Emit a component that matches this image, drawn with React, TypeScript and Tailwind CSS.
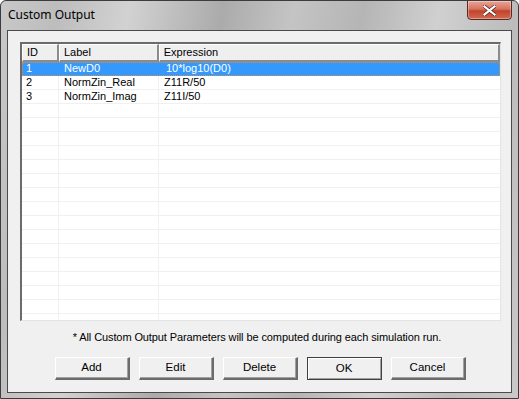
import React from "react";

const rows = [
  { id: "1", label: "NewD0", expr: "10*log10(D0)" },
  { id: "2", label: "NormZin_Real", expr: "Z11R/50" },
  { id: "3", label: "NormZin_Imag", expr: "Z11I/50" },
];

const EMPTY_ROWS = 16;

function HeaderCell({ w, children }: { w: string; children?: React.ReactNode }) {
  return (
    <div
      className={`${w} h-full flex items-center pl-[4px] border-t border-l border-t-white border-l-white border-r-2 border-b-2 border-r-[#8c8c8c] border-b-[#8c8c8c] bg-[#efefef]`}
    >
      {children}
    </div>
  );
}

function Button({ label, isDefault }: { label: string; isDefault?: boolean }) {
  return (
    <button
      className={`w-[75px] h-[23px] bg-[#f0f0f0] text-[11.5px] text-black flex items-center justify-center ${
        isDefault
          ? "border border-[#404040] shadow-[inset_1px_1px_0_#ffffff,inset_-1px_-1px_0_#a0a0a0]"
          : "border-t border-l border-t-white border-l-white border-r-2 border-b-2 border-r-[#6b6b6b] border-b-[#6b6b6b] shadow-[inset_-1px_-1px_0_#a0a0a0]"
      }`}
    >
      {label}
    </button>
  );
}

export default function App() {
  return (
    <div
      className="w-[519px] h-[399px] relative overflow-hidden rounded-t-[6px] border border-[#3c3c3c] bg-[linear-gradient(100deg,#c8c8c8_0%,#bdbdbd_10%,#d2d2d2_22%,#ababab_38%,#c4c4c4_50%,#b5b5b5_62%,#d0d0d0_75%,#bcbcbc_88%,#c9c9c9_100%)]"
      style={{ fontFamily: '"Liberation Sans", Arial, sans-serif' }}
    >
      {/* title bar */}
      <div className="h-[29px] flex items-center pl-[7px] pb-[1px] text-[12px] text-black" style={{ fontFamily: '"Noto Sans", "Liberation Sans", sans-serif' }}>
        Custom Output
      </div>
      <div className="absolute right-[6px] top-[-1px] w-[45px] h-[20px] rounded-b-[4px] border border-[#5a2a22] bg-[linear-gradient(#e9a598_0%,#d7725f_45%,#c2432b_55%,#d06a52_100%)] flex items-center justify-center shadow-[inset_0_0_0_1px_rgba(255,255,255,0.35)]">
        <svg width="13" height="11" viewBox="0 0 13 11">
          <path d="M1.5 1.5 L11.5 9.5 M11.5 1.5 L1.5 9.5" stroke="#5b2a20" strokeWidth="3.6" strokeLinecap="square" />
          <path d="M1.5 1.5 L11.5 9.5 M11.5 1.5 L1.5 9.5" stroke="#ffffff" strokeWidth="2.2" strokeLinecap="square" />
        </svg>
      </div>

      {/* client area */}
      <div className="mx-[6px] h-[363px] border border-[#4a4a4a] bg-[#f0f0f0] flex flex-col">
        <div className="pt-[11px] pl-[12px]">
          <div className="w-[481px] h-[279px] bg-white border-l-2 border-t-2 border-l-[#6b6b6b] border-t-[#6b6b6b] border-r border-b border-r-[#e3e3e3] border-b-[#e3e3e3] overflow-hidden text-[11px] text-black">
            <div className="flex h-[18px]">
              <HeaderCell w="w-[37px]">ID</HeaderCell>
              <HeaderCell w="w-[100px]">Label</HeaderCell>
              <HeaderCell w="w-[342px]">Expression</HeaderCell>
            </div>
            {rows.map((r, i) => (
              <div
                key={r.id}
                className={`flex h-[14px] ${
                  i === 0 ? "bg-[#3399ff] text-white outline-1 outline-dotted outline-[#e08a3a] -outline-offset-1" : "border-b border-[#f0f0f0]"
                }`}
              >
                <div className={`w-[37px] pl-[4px] leading-[13px] ${i === 0 ? "" : "border-r border-[#f0f0f0]"}`}>{r.id}</div>
                <div className={`w-[100px] pl-[5px] leading-[13px] ${i === 0 ? "" : "border-r border-[#f0f0f0]"}`}>{r.label}</div>
                <div className={`flex-1 leading-[13px] ${i === 0 ? "pl-[7px]" : "pl-[5px]"}`}>{r.expr}</div>
              </div>
            ))}
            {Array.from({ length: EMPTY_ROWS }).map((_, i) => (
              <div key={i} className="flex h-[14px] border-b border-[#f0f0f0]">
                <div className="w-[37px] border-r border-[#f0f0f0]" />
                <div className="w-[100px] border-r border-[#f0f0f0]" />
                <div className="flex-1" />
              </div>
            ))}
          </div>
        </div>

        <div className="mt-[9px] h-[14px] leading-[14px] text-center text-[11px] text-black pr-[5px] tracking-[-0.1px]">
          * All Custom Output Parameters will be computed during each simulation run.
        </div>

        <div className="mt-[13px] flex justify-center gap-[9px] pl-[1px]">
          <Button label="Add" />
          <Button label="Edit" />
          <Button label="Delete" />
          <Button label="OK" isDefault />
          <Button label="Cancel" />
        </div>
      </div>
    </div>
  );
}
